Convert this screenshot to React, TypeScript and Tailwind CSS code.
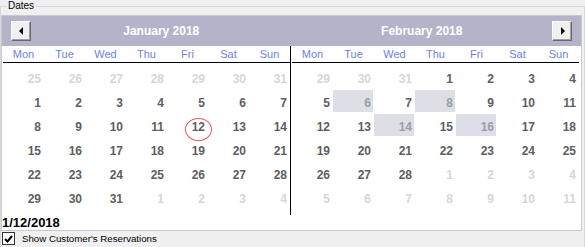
import React from 'react';

type Cell = { n: number; other: boolean };

const range = (a: number, b: number) => Array.from({ length: b - a + 1 }, (_, i) => a + i);

const janCells: Cell[] = [
    ...range(25, 31).map((n) => ({ n, other: true })),
    ...range(1, 31).map((n) => ({ n, other: false })),
    ...range(1, 4).map((n) => ({ n, other: true })),
];

const febCells: Cell[] = [
    ...range(29, 31).map((n) => ({ n, other: true })),
    ...range(1, 28).map((n) => ({ n, other: false })),
    ...range(1, 11).map((n) => ({ n, other: true })),
];

const dayNames = ['Mon', 'Tue', 'Wed', 'Thu', 'Fri', 'Sat', 'Sun'];

const NavButton: React.FC<{ dir: 'left' | 'right' }> = ({ dir }) => (
    <div className="flex h-[20px] w-[20px] items-center justify-center border border-t-white border-l-white border-r-[#696969] border-b-[#696969] bg-[#f0f0f0] shadow-[inset_-1px_-1px_0_#a0a0a0]">
        <svg width="5" height="8" viewBox="0 0 5 8">
            {dir === 'left' ? <polygon points="4,0 4,8 0,4" fill="#000" /> : <polygon points="1,0 1,8 5,4" fill="#000" />}
        </svg>
    </div>
);

const MonthGrid: React.FC<{ cells: Cell[]; highlight?: number[]; circled?: number }> = ({ cells, highlight = [], circled }) => (
    <div>
        <div className="grid h-[17px] grid-cols-[repeat(7,41px)] border-b border-black">
            {dayNames.map((d) => (
                <div key={d} className="text-center text-[11px] leading-[16px] text-[#6e80e4]">
                    {d}
                </div>
            ))}
        </div>
        <div className="grid grid-cols-[repeat(7,41px)] pt-[3px] pb-[5px]">
            {cells.map((c, i) => {
                const hl = !c.other && highlight.includes(c.n);
                const circle = !c.other && c.n === circled;
                return (
                    <div key={i} className="relative h-[24px]">
                        <div
                            className={
                                'h-[22px] w-[40px] pt-[4px] pr-[2px] text-right text-[12px] font-bold leading-[18px] ' +
                                (hl ? 'bg-[#dedee6] text-[#9c9ca8]' : c.other ? 'text-[#d6d6d6]' : 'text-[#5e5e5e]')
                            }
                        >
                            {c.n}
                        </div>
                        {circle && (
                            <span className="absolute left-[18px] top-[4px] h-[23px] w-[27px] rounded-[50%] border border-[#e85a5c]" />
                        )}
                    </div>
                );
            })}
        </div>
    </div>
);

export default function App() {
    return (
        <div className="h-[247px] w-[585px] overflow-hidden bg-[#f0f0f0] pt-[6px] font-['Liberation_Sans',Arial,sans-serif]">
            <div className="relative h-[260px] border border-[#d8d8d8]">
                <span className="absolute left-[5px] top-[-7px] bg-[#f0f0f0] px-[2px] text-[10px] leading-[12px] text-black">
                    Dates
                </span>

                <div className="mt-[8px] w-[581px] border border-[#c9c9d1] bg-white">
                    {/* title bar */}
                    <div className="flex h-[30px] items-center bg-[#b3b3c9] px-[9px]">
                        <NavButton dir="left" />
                        <div className="flex-1 text-center text-[12px] font-bold text-white">January 2018</div>
                        <div className="flex-1 text-center text-[12px] font-bold text-white">February 2018</div>
                        <NavButton dir="right" />
                    </div>

                    {/* months */}
                    <div className="flex pl-[1px]">
                        <div className="w-[287px]">
                            <MonthGrid cells={janCells} circled={12} />
                        </div>
                        <div className="w-[1px] bg-black" />
                        <div className="w-[288px] pl-[1px]">
                            <MonthGrid cells={febCells} highlight={[6, 8, 14, 16]} />
                        </div>
                    </div>

                    <div className="h-[15px] text-[13px] font-bold leading-[15px] text-black">1/12/2018</div>
                </div>

                <div className="ml-[1px] mt-[1px] flex items-center gap-[7px]">
                    <div className="flex h-[13px] w-[13px] items-center justify-center border border-[#333] bg-white">
                        <svg width="9" height="8" viewBox="0 0 9 8">
                            <polyline points="1,4 3.5,6.5 8,1" fill="none" stroke="#000" strokeWidth="2" />
                        </svg>
                    </div>
                    <span className="text-[9.7px] leading-[13px] text-black">Show Customer's Reservations</span>
                </div>
            </div>
        </div>
    );
}
